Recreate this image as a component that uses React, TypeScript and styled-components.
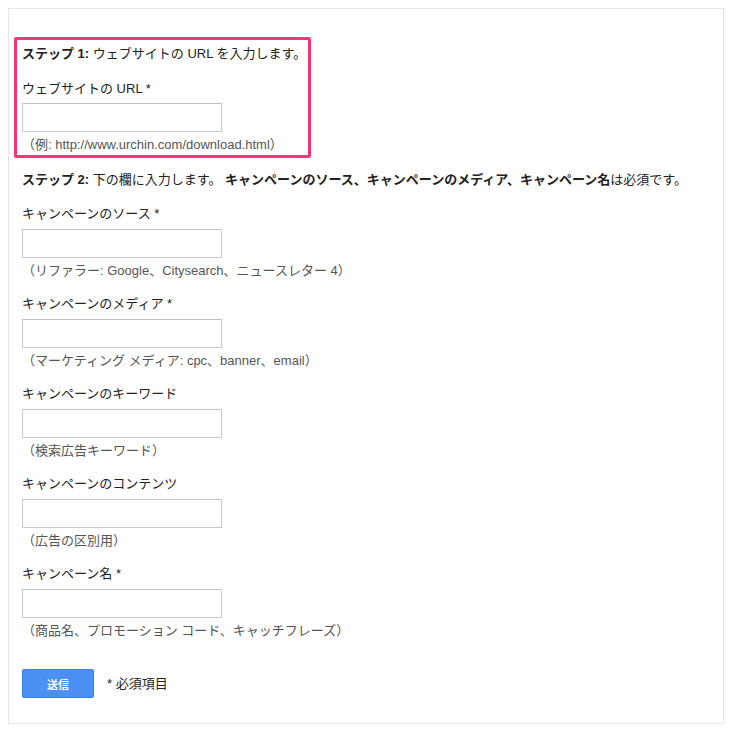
import React from 'react';
import styled, { createGlobalStyle } from 'styled-components';

// --- Data ---
type FieldData = {
  id: string;
  label: string;
  required: boolean;
  hint: string;
};

const CAMPAIGN_FIELDS: FieldData[] = [
  { id: "source", label: "キャンペーンのソース", required: true, hint: "（リファラー: Google、Citysearch、ニュースレター 4）" },
  { id: "medium", label: "キャンペーンのメディア", required: true, hint: "（マーケティング メディア: cpc、banner、email）" },
  { id: "term", label: "キャンペーンのキーワード", required: false, hint: "（検索広告キーワード）" },
  { id: "content", label: "キャンペーンのコンテンツ", required: false, hint: "（広告の区別用）" },
  { id: "name", label: "キャンペーン名", required: true, hint: "（商品名、プロモーション コード、キャッチフレーズ）" },
];

// --- Styled Components ---
const GlobalStyle = createGlobalStyle`
  body {
    margin: 0;
    background: #fff;
    font-family: "Liberation Sans", "Noto Sans CJK JP", Arial, sans-serif;
    font-size: 13px;
    color: #222;
  }
`;

const Panel = styled.div`
  margin: 8px;
  width: 716px;
  box-sizing: border-box;
  border: 1px solid #e5e5e5;
  padding: 28px 13px 25px;
`;

const HighlightBox = styled.div`
  margin: 0 -8px;
  width: 297px;
  box-sizing: border-box;
  border: 3px solid #ff3576;
  border-radius: 2px;
  padding: 5px 5px 1px;
`;

const StepTitle = styled.p<{ $top: number }>`
  margin: ${p => p.$top}px 0 0;
  line-height: 18px;
  white-space: nowrap;

  b {
    font-weight: 700;
  }
`;

const Field = styled.div<{ $top: number }>`
  margin-top: ${p => p.$top}px;
  display: flex;
  flex-direction: column;
  align-items: flex-start;
`;

const Label = styled.label`
  line-height: 18px;
  color: #222;
`;

const TextInput = styled.input`
  margin-top: 6px;
  width: 200px;
  height: 29px;
  box-sizing: border-box;
  border: 1px solid #c9c9c9;
  border-top-color: #c0c0c0;
  border-radius: 1px;
  padding: 0 6px;
  font: inherit;
  background: #fff;
  outline: none;
`;

const Hint = styled.span`
  margin-top: 4px;
  line-height: 18px;
  color: #555;
  white-space: nowrap;
`;

const Footer = styled.div`
  margin-top: 29px;
  display: flex;
  align-items: center;
  gap: 13px;
`;

const SubmitButton = styled.button`
  width: 72px;
  height: 29px;
  box-sizing: border-box;
  border: 1px solid #3b82f0;
  border-radius: 2px;
  background: #4d90f4;
  color: #fff;
  font-family: inherit;
  font-size: 11px;
  font-weight: 700;
  padding: 0;
  cursor: pointer;
`;

const RequiredNote = styled.span`
  line-height: 18px;
  color: #222;
`;

// --- Component ---
export default function App() {
  return (
    <>
      <GlobalStyle />
      <Panel>
        <HighlightBox>
          <StepTitle $top={0}>
            <b>ステップ 1:</b> ウェブサイトの URL を入力します。
          </StepTitle>
          <Field $top={17}>
            <Label>ウェブサイトの URL *</Label>
            <TextInput style={{ marginTop: 5 }} />
            <Hint>（例: http://www.urchin.com/download.html）</Hint>
          </Field>
        </HighlightBox>

        <StepTitle $top={13}>
          <b>ステップ 2:</b> 下の欄に入力します。 <b>キャンペーンのソース、キャンペーンのメディア、キャンペーン名</b>は必須です。
        </StepTitle>

        {CAMPAIGN_FIELDS.map((f) => (
          <Field $top={f.id === "source" ? 16 : 15} key={f.id}>
            <Label>{f.label}{f.required ? " *" : ""}</Label>
            <TextInput />
            <Hint>{f.hint}</Hint>
          </Field>
        ))}

        <Footer>
          <SubmitButton>送信</SubmitButton>
          <RequiredNote>* 必須項目</RequiredNote>
        </Footer>
      </Panel>
    </>
  );
}
